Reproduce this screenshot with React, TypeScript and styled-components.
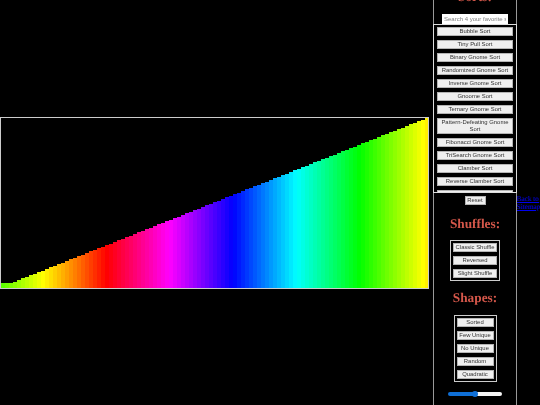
import styled, { createGlobalStyle } from "styled-components";

const GlobalStyle = createGlobalStyle`
  html, body {
    margin: 0;
    padding: 0;
    height: 405px;
    overflow: hidden;
    background: #000;
    text-rendering: geometricPrecision;
  }
`;

const Page = styled.div`
  display: flex;
  width: 540px;
  height: 405px;
  overflow: hidden;
`;

const ChartArea = styled.div`
  width: 429px;
  margin-right: 4px;
  padding-top: 117px;
  flex: none;
`;

const ChartFrame = styled.svg`
  display: block;
  width: 429px;
  height: 172px;
  border: 1px solid #ccc;
  box-sizing: border-box;
`;

const Panel = styled.div`
  width: 84px;
  height: 430px;
  margin-top: -12px;
  flex: none;
  box-sizing: border-box;
  border-left: 1px solid #999;
  border-right: 1px solid #999;
  display: flex;
  flex-direction: column;
  align-items: center;
  will-change: transform;
`;

const Heading = styled.h2`
  margin: 0;
  font: bold 13.3px/16px "Liberation Serif", serif;
  color: #d4574a;
`;

const SortsHeading = styled(Heading)`
  height: 26px;
  padding-top: 1px;
  box-sizing: border-box;
`;

const Search = styled.input`
  width: 66px;
  height: 10px;
  flex: none;
  box-sizing: border-box;
  padding: 0 2px;
  border: 0;
  background: #fff;
  font: 6px "Liberation Sans", sans-serif;
  color: #777;
  &::placeholder {
    color: #808080;
  }
`;

const SortList = styled.div`
  align-self: stretch;
  height: 169px;
  margin: 0 -1px;
  flex: none;
  box-sizing: border-box;
  border: 1px solid #ddd;
  overflow: hidden;
  display: flex;
  flex-direction: column;
  gap: 4px;
  padding: 2px 3px;
`;

const Btn = styled.button<{ $w?: number }>`
  display: block;
  flex: none;
  box-sizing: border-box;
  width: ${(p) => (p.$w ? `${p.$w}px` : "100%")};
  min-height: 9px;
  margin: 0;
  padding: 0 1px;
  border: 1px solid #b4b4b4;
  background: #efefef;
  color: #333;
  font: 5.9px/7px "Liberation Sans", sans-serif;
  text-align: center;
`;

const ResetBtn = styled(Btn)`
  margin-top: 3px;
`;

const ShufflesHeading = styled(Heading)`
  margin-top: 11px;
`;

const Group = styled.div<{ $top: number }>`
  margin-top: ${(p) => p.$top}px;
  box-sizing: border-box;
  border: 1px solid #ccc;
  display: flex;
  flex-direction: column;
  gap: 4px;
  padding: 2px;
`;

const ShapesHeading = styled(Heading)`
  margin-top: 9px;
`;

const Slider = styled.input`
  appearance: none;
  -webkit-appearance: none;
  width: 54px;
  height: 4px;
  margin: 10px 0 0;
  padding: 0;
  border-radius: 2px;
  background: linear-gradient(to right, #0f6fd6 50%, #f5f5f5 50%);

  &::-webkit-slider-thumb {
    -webkit-appearance: none;
    width: 6px;
    height: 6px;
    border-radius: 50%;
    background: #0f6fd6;
  }
`;

const BackLink = styled.a`
  display: block;
  flex: none;
  width: 23px;
  margin-top: 195px;
  height: 16px;
  font: 7.2px/8px "Liberation Serif", serif;
  color: #00e;
  text-decoration: underline;
`;

const sorts = [
  "Bubble Sort",
  "Tiny Pull Sort",
  "Binary Gnome Sort",
  "Randomized Gnome Sort",
  "Inverse Gnome Sort",
  "Gnoome Sort",
  "Ternary Gnome Sort",
  "Pattern-Defeating Gnome Sort",
  "Fibonacci Gnome Sort",
  "TriSearch Gnome Sort",
  "Clamber Sort",
  "Reverse Clamber Sort",
  "Insertion Gnome Sort",
];

const shuffles = ["Classic Shuffle", "Reversed", "Slight Shuffle"];
const shapes = ["Sorted", "Few Unique", "No Unique", "Random", "Quadratic"];

const BAR_W = 4;
const BAR_COUNT = 107;
const bars = Array.from({ length: BAR_COUNT }, (_, i) => i);

const App = () => {
  return (
    <Page>
      <GlobalStyle />
      <ChartArea>
        <ChartFrame viewBox="0 0 427 170" shapeRendering="crispEdges">
          {bars.map((i) => {
            const x = i * BAR_W;
            const h = Math.max(5, ((x + BAR_W) / 428) * 170);
            const hue = 98 - (x * 360) / 380;
            return (
              <rect
                key={i}
                x={x}
                y={170 - h}
                width={BAR_W}
                height={h}
                fill={`hsl(${hue}, 100%, 50%)`}
              />
            );
          })}
        </ChartFrame>
      </ChartArea>
      <Panel>
        <SortsHeading>Sorts:</SortsHeading>
        <Search placeholder="Search 4 your favorite sorts" />
        <SortList>
          {sorts.map((s) => (
            <Btn key={s}>{s}</Btn>
          ))}
        </SortList>
        <ResetBtn $w={21}>Reset</ResetBtn>
        <ShufflesHeading>Shuffles:</ShufflesHeading>
        <Group $top={8}>
          {shuffles.map((s) => (
            <Btn key={s} $w={44}>
              {s}
            </Btn>
          ))}
        </Group>
        <ShapesHeading>Shapes:</ShapesHeading>
        <Group $top={9}>
          {shapes.map((s) => (
            <Btn key={s} $w={37}>
              {s}
            </Btn>
          ))}
        </Group>
        <Slider type="range" defaultValue={50} />
      </Panel>
      <BackLink href="#">Back to Sitemap</BackLink>
    </Page>
  );
};

export default App;
